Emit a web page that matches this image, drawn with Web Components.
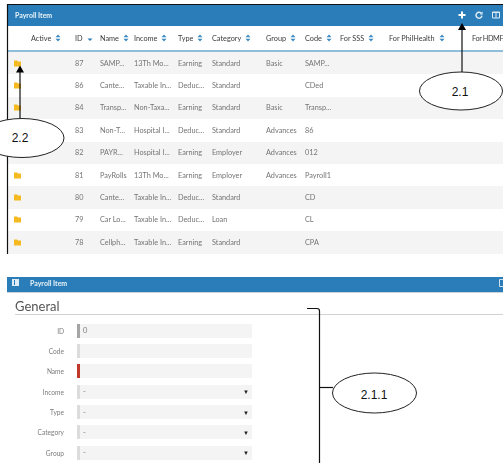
<!DOCTYPE html>
<html>
<head>
<meta charset="utf-8">
<title>Payroll Item</title>
<style>
  html, body { margin: 0; height: 463px; overflow: hidden; background: #fff; }
  body { position: relative; font-family: Lato, "Open Sans", sans-serif; }
  .page { padding: 5px 0 0 7px; width: 496px; box-sizing: content-box; filter: blur(0.35px); }
  pi-grid { margin-bottom: 23px; }
</style>
</head>
<body>
<div class="page">
  <pi-grid></pi-grid>
  <pi-form></pi-form>
</div>
<pi-callouts></pi-callouts>

<script>
/*
payroll item screen from a user manual
 - pi-bar: blue title bar, slots: icons on the left / right
 - pi-grid + pi-row: list of items
 - pi-form + pi-field: the General section
 - pi-callouts: the numbered balloons drawn over the screenshot
 */
const COLS = '68px 25px 34px 44px 34px 54px 39px 35px 49px 83px 31px';

const HEADS = ['Active', 'ID', 'Name', 'Income', 'Type', 'Category', 'Group', 'Code', 'For SSS', 'For PhilHealth', 'For HDMF'];

const ROWS = [
  ['87', 'SAMP...', '13Th Mo...', 'Earning', 'Standard', 'Basic', 'SAMP...'],
  ['86', 'Cante...', 'Taxable In...', 'Deduc...', 'Standard', '', 'CDed'],
  ['84', 'Transp...', 'Non-Taxa...', 'Earning', 'Standard', 'Basic', 'Transp...'],
  ['83', 'Non-T...', 'Hospital I...', 'Deduc...', 'Standard', 'Advances', '86'],
  ['82', 'PAYR...', 'Hospital I...', 'Earning', 'Employer', 'Advances', '012'],
  ['81', 'PayRolls', '13Th Mo...', 'Earning', 'Employer', 'Advances', 'Payroll1'],
  ['80', 'Cante...', 'Taxable In...', 'Deduc...', 'Standard', '', 'CD'],
  ['79', 'Car Lo...', 'Taxable In...', 'Deduc...', 'Loan', '', 'CL'],
  ['78', 'Cellph...', 'Taxable In...', 'Earning', 'Standard', '', 'CPA'],
];

const FOLDER = `<svg width="7" height="7" viewBox="0 0 7 7"><path fill="#f5b921" d="M0 .5h3l1 1h3v5H0z"/></svg>`;

class PiBar extends HTMLElement {
  constructor() {
    super();
    this.attachShadow({ mode: 'open' });
    this.shadowRoot.innerHTML = `
      <style>
        :host {
          display: flex;
          align-items: center;
          background: #2a7db8;
          color: #e8f2f9;
          font: 700 7px Lato, sans-serif;
          overflow: hidden;
          box-sizing: border-box;
        }
        .end { margin-left: auto; display: flex; align-items: center; }
      </style>
      <slot name="start"></slot>
      <slot></slot>
      <div class="end"><slot name="end"></slot></div>
    `;
  }
}
customElements.define('pi-bar', PiBar);

class PiRow extends HTMLElement {
  constructor() {
    super();
    this.attachShadow({ mode: 'open' });
    this.shadowRoot.innerHTML = `
      <style>
        :host {
          display: grid;
          grid-template-columns: ${COLS};
          height: 22.4px;
          align-items: center;
          font: 400 7.3px Lato, sans-serif;
          color: #757575;
          white-space: nowrap;
        }
        :host(:nth-of-type(odd)) { background: #f4f4f4; }
        .icon { display: flex; padding-left: 7px; }
      </style>
      <div class="icon">${FOLDER}</div>
    `;
  }
  connectedCallback() {
    const [id, name, income, type, category, group, code] = JSON.parse(this.dataset.cells);
    for (const text of [id, name, income, type, category, group, code]) {
      const cell = document.createElement('div');
      cell.textContent = text;
      this.shadowRoot.append(cell);
    }
  }
}
customElements.define('pi-row', PiRow);

class PiGrid extends HTMLElement {
  constructor() {
    super();
    this.attachShadow({ mode: 'open' });
    this.shadowRoot.innerHTML = `
      <style>
        :host { display: block; overflow: hidden; }
        pi-bar { height: 21px; padding: 0 0 2px 8px; }
        .tools { display: flex; align-items: center; }
        .tools svg { display: block; }
        .head {
          display: grid;
          grid-template-columns: ${COLS};
          height: 24px;
          align-items: center;
          border-bottom: 2px solid #8fbddc;
          font: 400 7.3px Lato, sans-serif;
          color: #3c3c3c;
          white-space: nowrap;
          box-sizing: content-box;
        }
        .head > div { display: flex; align-items: center; gap: 4px; }
        .head > div:first-child { padding-left: 24px; }
        .head > div:last-child { letter-spacing: -0.4px; }
        .rows { display: block; }
      </style>
      <pi-bar>
        Payroll Item
        <div class="tools" slot="end">
          <svg width="8" height="8" viewBox="0 0 8 8" style="margin-right:9px"><path fill="#fff" d="M3 .5h2V3h2.5v2H5v2.5H3V5H.5V3H3z"/></svg>
          <svg width="8" height="8" viewBox="0 0 8 8" style="margin-right:9px"><path fill="none" stroke="#dcebf5" stroke-width="1.5" d="M6.6 2.6A3 3 0 1 0 7 4.6"/><path fill="#dcebf5" d="M7.6.6v3H4.8z"/></svg>
          <svg width="8" height="8" viewBox="0 0 8 8" style="margin-right:3px"><path fill="none" stroke="#dcebf5" d="M.5 1h7v6h-7zM4 1v6"/><path fill="#dcebf5" d="M.5 1h7v1h-7z"/></svg>
        </div>
      </pi-bar>
      <div class="head"></div>
      <div class="rows"></div>
    `;
  }
  connectedCallback() {
    const head = this.shadowRoot.querySelector('.head');
    HEADS.forEach((label) => {
      const cell = document.createElement('div');
      // ID is the sorted column, so only its down arrow shows
      const arrows = label === 'ID'
        ? '<path fill="#2a7db8" d="M.5 4.5h5L3 7z"/>'
        : '<path fill="#3d8cc4" d="M.5 3.2h5L3 .5zM.5 4.8h5L3 7.5z"/>';
      cell.innerHTML = `<span>${label}</span>` + (label === 'For HDMF' ? '' : `<svg width="6" height="8" viewBox="0 0 6 8">${arrows}</svg>`);
      head.append(cell);
    });
    const rows = this.shadowRoot.querySelector('.rows');
    ROWS.forEach((cells) => {
      const row = document.createElement('pi-row');
      row.dataset.cells = JSON.stringify(cells);
      rows.append(row);
    });
  }
}
customElements.define('pi-grid', PiGrid);

class PiField extends HTMLElement {
  static get observedAttributes() {
    return ['label', 'value', 'mark', 'select'];
  }
  constructor() {
    super();
    this.attachShadow({ mode: 'open' });
    this.shadowRoot.innerHTML = `
      <style>
        :host {
          display: grid;
          grid-template-columns: 57px 175px;
          column-gap: 13px;
          align-items: center;
          height: 14px;
          font: 400 6.6px Lato, sans-serif;
          color: #7c7c7c;
        }
        .label { text-align: right; }
        .box {
          height: 14px;
          background: #f4f4f4;
          border-left: 3px solid var(--mark, #dcdcdc);
          box-sizing: border-box;
          display: flex;
          align-items: center;
          padding: 0 3px;
          justify-content: space-between;
          font-size: 7.5px;
        }
        .arrow { font-size: 6px; color: #222; }
      </style>
      <div class="label"></div>
      <div class="box"><span class="value"></span><span class="arrow"></span></div>
    `;
  }
  connectedCallback() {
    this._update();
  }
  attributeChangedCallback() {
    this._update();
  }
  _update() {
    const root = this.shadowRoot;
    root.querySelector('.label').textContent = this.getAttribute('label') || '';
    root.querySelector('.value').textContent = this.getAttribute('value') || '';
    root.querySelector('.arrow').textContent = this.hasAttribute('select') ? '▼' : '';
    const mark = this.getAttribute('mark');
    if (mark) this.style.setProperty('--mark', mark);
  }
}
customElements.define('pi-field', PiField);

class PiForm extends HTMLElement {
  constructor() {
    super();
    this.attachShadow({ mode: 'open' });
    this.shadowRoot.innerHTML = `
      <style>
        :host { display: block; }
        pi-bar { height: 16px; border-bottom: 1px solid #c9d3d9; padding-bottom: 3px; }
        .left { display: flex; padding-left: 5px; margin-right: 11px; }
        .right { display: block; margin-right: -4px; }
        h2 {
          font: 400 13px/16px Lato, sans-serif;
          color: #555;
          margin: 5px 0 0 8px;
          padding-bottom: 0;
          border-bottom: 1px solid #d2d2d2;
        }
        .fields { display: grid; row-gap: 6.4px; margin-top: 9px; }
      </style>
      <pi-bar>
        <div class="left" slot="start">
          <svg width="7" height="7" viewBox="0 0 7 7"><path fill="#dcebf5" d="M0 0h7v7H0z"/><path fill="#2a7db8" d="M2 1h1v5H2z"/></svg>
        </div>
        Payroll Item
        <svg class="right" slot="end" width="8" height="8" viewBox="0 0 8 8"><path fill="none" stroke="#cfe0ec" d="M.5.5h7v7h-7z"/></svg>
      </pi-bar>
      <h2>General</h2>
      <div class="fields">
        <pi-field label="ID" value="0" mark="#a5a5a5"></pi-field>
        <pi-field label="Code"></pi-field>
        <pi-field label="Name" mark="#c0392b"></pi-field>
        <pi-field label="Income" value="-" select></pi-field>
        <pi-field label="Type" value="-" select></pi-field>
        <pi-field label="Category" value="-" select></pi-field>
        <pi-field label="Group" value="-" select></pi-field>
      </div>
    `;
  }
}
customElements.define('pi-form', PiForm);

class PiCallouts extends HTMLElement {
  constructor() {
    super();
    this.attachShadow({ mode: 'open' });
    this.shadowRoot.innerHTML = `
      <style>
        :host { position: absolute; inset: 0; display: block; pointer-events: none; }
        svg { display: block; }
        ellipse { fill: #fff; stroke: #222; stroke-width: 1; }
        text { font: 400 12px "Liberation Sans", sans-serif; fill: #111; text-anchor: middle; }
        .line { stroke: #111; stroke-width: 1.2; fill: none; }
      </style>
      <svg width="503" height="463" viewBox="0 0 503 463">
        <path class="line" d="M503 4.5H7.5V254"/>

        <path class="line" d="M462 72V28"/>
        <path fill="#000" d="M462 23l4 7h-8z"/>
        <ellipse cx="461" cy="91" rx="41.5" ry="19"/>
        <text x="460" y="96">2.1</text>

        <path class="line" d="M20 119V70"/>
        <path fill="#000" d="M20 65.500l4 7h-8z"/>
        <ellipse cx="22" cy="138" rx="42" ry="19.500"/>
        <text x="20" y="142">2.2</text>

        <path class="line" d="M307 308.500h10q2.500 0 2.500 2.500V463"/>
        <path class="line" d="M320 387.500h13" stroke-width="1.500"/>
        <ellipse cx="374.500" cy="393" rx="42" ry="20"/>
        <text x="374" y="398.500">2.1.1</text>
      </svg>
    `;
  }
}
customElements.define('pi-callouts', PiCallouts);
</script>
</body>
</html>
